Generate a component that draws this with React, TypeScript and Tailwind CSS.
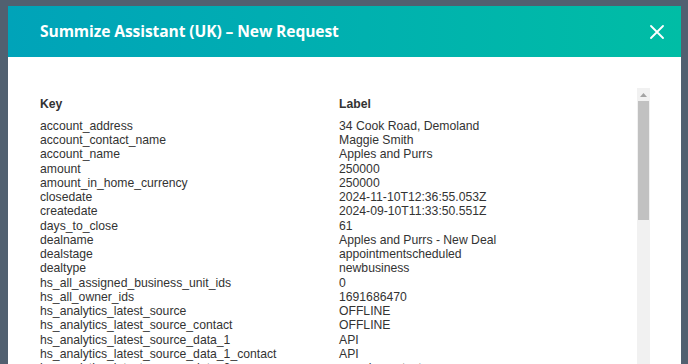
import React from "react";

/* ------------------------------------------------------------------ */
/*  Data                                                               */
/* ------------------------------------------------------------------ */
const rows: [string, string][] = [
  ["account_address", "34 Cook Road, Demoland"],
  ["account_contact_name", "Maggie Smith"],
  ["account_name", "Apples and Purrs"],
  ["amount", "250000"],
  ["amount_in_home_currency", "250000"],
  ["closedate", "2024-11-10T12:36:55.053Z"],
  ["createdate", "2024-09-10T11:33:50.551Z"],
  ["days_to_close", "61"],
  ["dealname", "Apples and Purrs - New Deal"],
  ["dealstage", "appointmentscheduled"],
  ["dealtype", "newbusiness"],
  ["hs_all_assigned_business_unit_ids", "0"],
  ["hs_all_owner_ids", "1691686470"],
  ["hs_analytics_latest_source", "OFFLINE"],
  ["hs_analytics_latest_source_contact", "OFFLINE"],
  ["hs_analytics_latest_source_data_1", "API"],
  ["hs_analytics_latest_source_data_1_contact", "API"],
  ["hs_analytics_latest_source_data_2", "sample-contact"],
  ["hs_analytics_latest_source_data_2_contact", "sample-contact"],
];

/* ------------------------------------------------------------------ */
/*  Component                                                          */
/* ------------------------------------------------------------------ */
export default function App() {
  return (
    <div className="h-[364px] overflow-hidden bg-[#516070] pl-[8px] pr-[7px] pt-[6px]">
      <div className="flex h-full flex-col bg-white">
        {/* -------- Header -------- */}
        <div className="flex h-[51px] shrink-0 items-center justify-between bg-gradient-to-r from-[#00a3b9] to-[#00bda5] pl-[32px] pr-[17px]">
          <h1 className="font-['Open_Sans',sans-serif] text-[15.6px] font-bold tracking-[-0.1px] text-white">
            Summize Assistant (UK) – New Request
          </h1>
          <svg width="14" height="14" viewBox="0 0 14 14" className="text-white">
            <path d="M1 1 L13 13 M13 1 L1 13" stroke="currentColor" strokeWidth="1.8" strokeLinecap="round" />
          </svg>
        </div>

        {/* -------- Body -------- */}
        <div className="flex min-h-0 flex-1 pl-[32px] pr-[31px] pt-[31px]">
          <div className="min-w-0 flex-1 overflow-hidden pt-[9px] font-['Liberation_Sans',Arial,sans-serif] text-[12.2px] leading-[14.25px] text-[#333]">
            <div className="mb-[7.5px] flex font-bold">
              <div className="w-[299px]">Key</div>
              <div>Label</div>
            </div>
            {rows.map(([key, label]) => (
              <div key={key} className="flex whitespace-nowrap">
                <div className="w-[299px]">{key}</div>
                <div>{label}</div>
              </div>
            ))}
          </div>

          {/* Scrollbar */}
          <div className="flex w-[13px] shrink-0 flex-col bg-[#f1f1f1]">
            <div className="flex h-[13px] items-center justify-center">
              <svg width="7" height="4" viewBox="0 0 7 4">
                <path d="M3.5 0 L7 4 L0 4 Z" fill="#a3a3a3" />
              </svg>
            </div>
            <div className="mx-[1px] h-[119px] bg-[#c1c1c1]" />
          </div>
        </div>
      </div>
    </div>
  );
}
